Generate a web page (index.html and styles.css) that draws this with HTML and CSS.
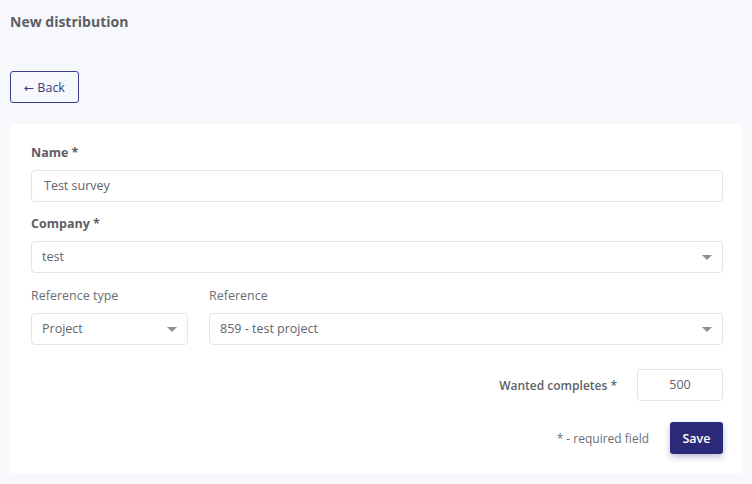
FILE: index.html
```html
<!DOCTYPE html>
<html lang="en">
<head>
    <meta charset="UTF-8">
    <title>New distribution</title>
    <link rel="stylesheet" href="styles.css">
</head>
<body>
    <div class="page">
        <h1 class="page-title">New distribution</h1>

        <button class="back-button"><span class="arrow">&larr;</span> Back</button>

        <!-- Formulaire -->
        <div class="card">
            <div class="form-group">
                <label class="label label-bold">Name *</label>
                <div class="input-field">Test survey</div>
            </div>
            <div class="form-group">
                <label class="label label-bold">Company *</label>
                <div class="input-field select">test <span class="caret"></span></div>
            </div>
            <div class="form-row">
                <div class="form-group ref-type">
                    <label class="label">Reference type</label>
                    <div class="input-field select">Project <span class="caret"></span></div>
                </div>
                <div class="form-group ref">
                    <label class="label">Reference</label>
                    <div class="input-field select">859 - test project <span class="caret"></span></div>
                </div>
            </div>
            <div class="wanted-row">
                <span class="label-bold wanted-label">Wanted completes *</span>
                <div class="input-field wanted-input">500</div>
            </div>
            <div class="save-row">
                <span class="required-note">* - required field</span>
                <button class="save-button">Save</button>
            </div>
        </div>
    </div>
</body>
</html>
```

FILE: styles.css
```css
body {
    margin: 0;
    font-family: "Open Sans", Arial, sans-serif;
    background-color: #f7f8fc;
    color: #5f6368;
}
.page {
    padding: 12px 10px 10px 10px;
}
.page-title {
    margin: 0;
    font-size: 14px;
    line-height: 19px;
    font-weight: 700;
    color: #5c5f66;
}
.back-button {
    margin-top: 40px;
    width: 69px;
    height: 32px;
    background: transparent;
    border: 1px solid #3d3d8f;
    border-radius: 3px;
    color: #3a3a80;
    font-family: inherit;
    font-size: 12.5px;
    padding: 0;
}
.arrow {
    font-family: "DejaVu Sans", sans-serif;
    font-size: 12px;
}
.card {
    margin-top: 21px;
    background-color: white;
    border-radius: 4px;
    padding: 20px 19px 20px 21px;
}
.form-group {
    margin-bottom: 13px;
}
.label {
    display: block;
    font-size: 12.5px;
    line-height: 17px;
    margin-bottom: 9px;
    color: #6b6e75;
}
.label-bold {
    font-weight: 700;
    color: #5c5f66;
}
.input-field {
    box-sizing: border-box;
    height: 32px;
    border: 1px solid #e3e5ea;
    border-radius: 4px;
    padding: 0 12px;
    font-size: 12.5px;
    line-height: 30px;
    color: #62656c;
    position: relative;
}
.select {
    padding-left: 10px;
}
.caret {
    position: absolute;
    right: 10px;
    top: 13px;
    width: 0;
    height: 0;
    border-left: 5px solid transparent;
    border-right: 5px solid transparent;
    border-top: 5px solid #8a9096;
}
.form-row {
    display: flex;
    gap: 21px;
    margin-top: 14px;
}
.ref-type {
    width: 157px;
}
.ref {
    flex: 1;
}
.wanted-row {
    display: flex;
    justify-content: flex-end;
    align-items: center;
    gap: 20px;
    margin-top: 11px;
}
.wanted-label {
    font-size: 12px;
    font-weight: 600;
}
.wanted-input {
    width: 86px;
    text-align: center;
}
.save-row {
    display: flex;
    justify-content: flex-end;
    align-items: center;
    gap: 21px;
    margin-top: 21px;
}
.required-note {
    font-size: 12px;
    color: #6b6e75;
}
.save-button {
    width: 53px;
    height: 32px;
    border: none;
    border-radius: 3px;
    background-color: #2b2a78;
    color: white;
    font-family: inherit;
    font-size: 12.5px;
    font-weight: 600;
    box-shadow: 0 3px 6px rgba(43, 42, 120, 0.3);
    padding: 0;
}
```
